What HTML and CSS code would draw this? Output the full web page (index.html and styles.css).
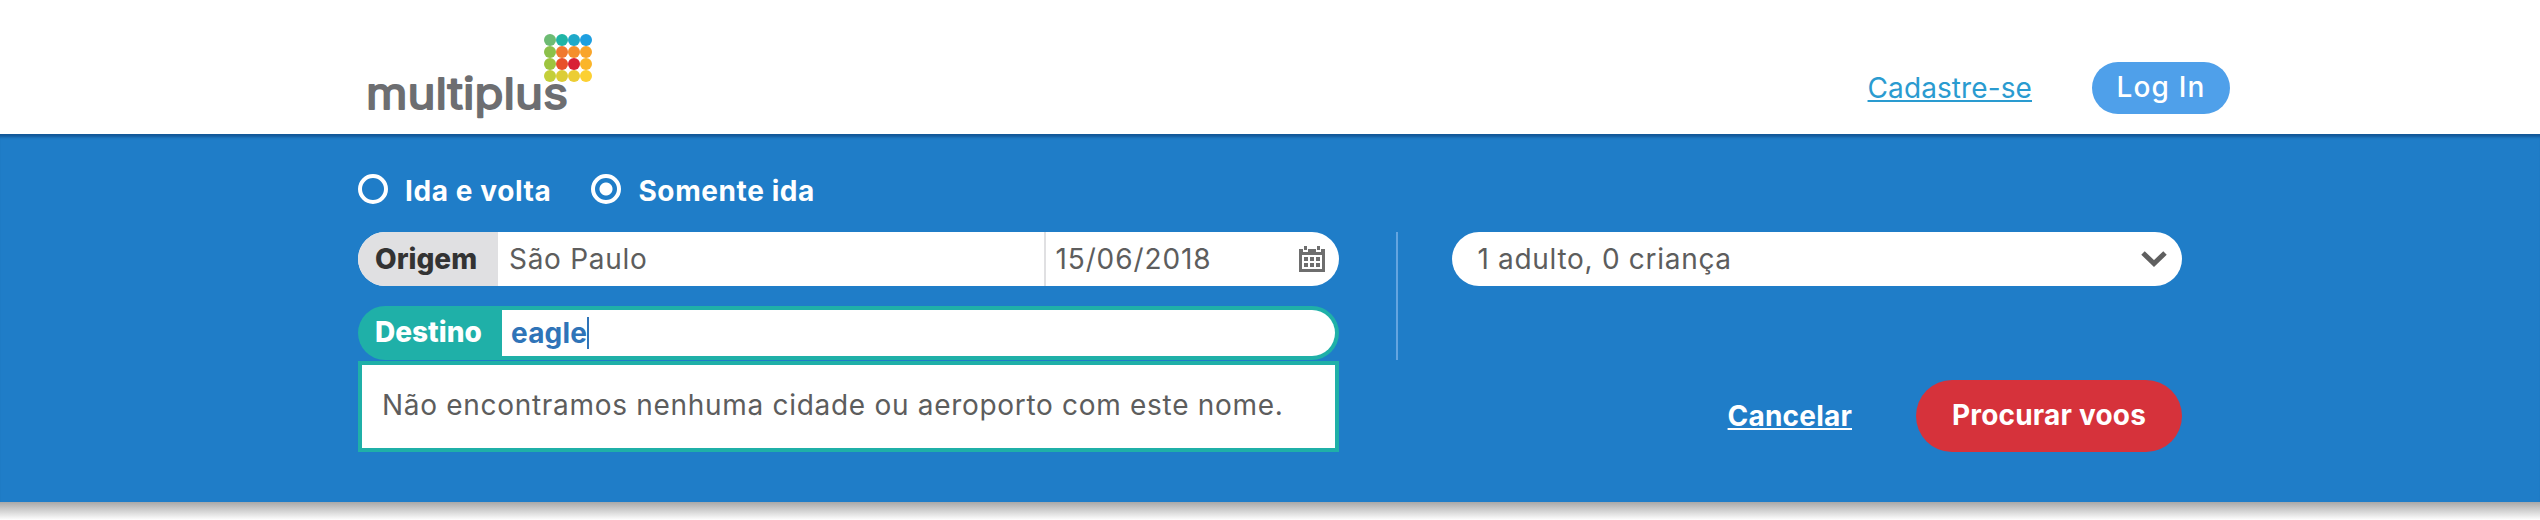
FILE: index.html
```html
<!DOCTYPE html>
<html lang="pt-br">
<head>
  <meta charset="UTF-8">
  <meta name="viewport" content="width=device-width, initial-scale=1.0">
  <title>Multiplus - Procurar voos</title>
  <link rel="stylesheet" href="styles.css">
</head>
<body>
<header class="topo">
  <svg class="logo" width="232" height="100" viewBox="0 0 232 100">
    <g>
      <circle cx="188" cy="10" r="6" fill="#6dbb73"/><circle cx="200" cy="10" r="6" fill="#1fb5a6"/><circle cx="212" cy="10" r="6" fill="#1fa9c9"/><circle cx="224" cy="10" r="6" fill="#1e9fe0"/>
      <circle cx="188" cy="22" r="6" fill="#8cc04a"/><circle cx="200" cy="22" r="6" fill="#f0792f"/><circle cx="212" cy="22" r="6" fill="#f58f2c"/><circle cx="224" cy="22" r="6" fill="#f9a52b"/>
      <circle cx="188" cy="34" r="6" fill="#9ec43f"/><circle cx="200" cy="34" r="6" fill="#e8502a"/><circle cx="212" cy="34" r="6" fill="#d81f35"/><circle cx="224" cy="34" r="6" fill="#fbb52a"/>
      <circle cx="188" cy="46" r="6" fill="#c4cf3a"/><circle cx="200" cy="46" r="6" fill="#dccd36"/><circle cx="212" cy="46" r="6" fill="#eccd34"/><circle cx="224" cy="46" r="6" fill="#fcd033"/>
    </g>
    <text class="logo-texto" x="4" y="79" textLength="202" lengthAdjust="spacingAndGlyphs">multiplus</text>
  </svg>
  <nav class="acesso">
    <a class="cadastro" href="#">Cadastre-se</a>
    <a class="login" href="#">Log In</a>
  </nav>
</header>

<section class="busca">
  <div class="tipos">
    <label class="tipo"><span class="radio"></span>Ida e volta</label>
    <label class="tipo"><span class="radio marcado"></span>Somente ida</label>
  </div>

  <div class="form">
    <div class="trecho">
      <div class="campo">
        <span class="rotulo">Origem</span>
        <span class="valor">São Paulo</span>
        <span class="data">15/06/2018
          <svg class="calendario" width="26" height="26" viewBox="0 0 26 26">
            <path fill="#6e6e6e" d="M5 0h3v4h-3zM18 0h3v4h-3zM0 3h4v3h5v-3h8v3h5v-3h4v23h-26z"/>
            <path fill="#fff" d="M3 9h20v14h-20z"/>
            <path fill="#6e6e6e" d="M5 11h4v4h-4zM11 11h4v4h-4zM17 11h4v4h-4zM5 17h4v4h-4zM11 17h4v4h-4zM17 17h4v4h-4z"/>
          </svg>
        </span>
      </div>
      <div class="campo ativo">
        <span class="rotulo">Destino</span>
        <span class="valor digitado"><span class="cursor">eagle</span></span>
      </div>
      <div class="sem-resultado">Não encontramos nenhuma cidade ou aeroporto com este nome.</div>
    </div>

    <div class="divisor"></div>

    <div class="lado">
      <div class="passageiros">
        <span>1 adulto, 0 criança</span>
        <svg width="26" height="16" viewBox="0 0 26 16">
          <path fill="none" stroke="#5f5f5f" stroke-width="5" d="M2 2l11 10.500l11-10.500"/>
        </svg>
      </div>
      <div class="acoes">
        <a class="cancelar" href="#">Cancelar</a>
        <a class="procurar" href="#">Procurar voos</a>
      </div>
    </div>
  </div>
</section>
<div class="sombra"></div>
</body>
</html>
```

FILE: styles.css
```css
body { margin: 0; background: #fff; font-family: Inter, "Noto Sans", sans-serif; font-size: 28px; letter-spacing: .7px; color: #5d5d5d; overflow: hidden; }
a { color: inherit; }

.topo { height: 134px; box-sizing: border-box; padding: 24px 310px 0 362px; display: flex; justify-content: space-between; align-items: flex-start; background: #fff; }
.logo { display: block; margin-top: 6px; }
.logo-texto { font-family: Inter, sans-serif; font-size: 43px; font-weight: 400; letter-spacing: 0; fill: #6d6e71; stroke: #6d6e71; stroke-width: 1.800px; stroke-linejoin: round; }
.acesso { display: flex; align-items: center; gap: 60px; margin-top: 38px; }
.cadastro { color: #2a9bd0; letter-spacing: .1px; }
.login { display: block; width: 138px; height: 52px; line-height: 50px; text-align: center; border-radius: 26px; background: #4fa0ea; color: #fff; text-decoration: none; font-weight: 500; letter-spacing: 1.200px; }

.busca { height: 368px; box-sizing: border-box; padding: 40px 358px 0; background: #1f7dc8; box-shadow: inset 0 5px 3px -2px rgba(0,40,90,.45); }
.sombra { height: 18px; background: linear-gradient(#a8a8a8, #fff); }

.tipos { display: flex; gap: 40px; height: 30px; margin-bottom: 28px; }
.tipo { display: flex; align-items: center; gap: 17px; color: #fff; font-weight: 700; letter-spacing: .6px; padding-top: 4px; }
.radio { display: block; width: 30px; height: 30px; margin-top: -4px; box-sizing: border-box; border: 4px solid #fff; border-radius: 50%; }
.radio.marcado { background: radial-gradient(circle, #fff 0 6px, transparent 7px); }

.form { display: flex; align-items: flex-start; }
.trecho { width: 982px; }
.divisor { width: 2px; height: 128px; margin: 0 54px 0 57px; background: #64a5e0; }
.lado { width: 730px; }

.campo { display: flex; align-items: center; height: 54px; border-radius: 27px; background: #fff; overflow: hidden; }
.campo + .campo { margin-top: 20px; }
.rotulo { width: 140px; height: 100%; line-height: 54px; box-sizing: border-box; padding-left: 17px; background: #e0e0e2; color: #333; font-weight: 800; letter-spacing: 0; }
.valor { flex: 1; padding-left: 11px; line-height: 58px; }
.data { display: flex; align-items: center; justify-content: space-between; width: 295px; height: 100%; box-sizing: border-box; padding: 0 14px 0 9px; border-left: 2px solid #e0e0e2; letter-spacing: .9px; }

.ativo { background: #1fb0a8; padding: 4px 4px 4px 0; box-sizing: border-box; }
.ativo .rotulo { width: 144px; line-height: 44px; background: none; color: #fff; }
.ativo .valor { height: 100%; line-height: 46px; background: #fff; border-radius: 0 23px 23px 0; padding-left: 9px; letter-spacing: .2px; }
.digitado { color: #2f74b8; font-weight: 700; }
.cursor { display: inline-block; height: 32px; line-height: 32px; border-right: 2px solid #2f74b8; }

.sem-resultado { margin-top: 1px; height: 91px; line-height: 81px; box-sizing: border-box; padding-left: 20px; border: 4px solid #1fb0a8; background: #fff; }

.passageiros { display: flex; align-items: center; justify-content: space-between; height: 54px; box-sizing: border-box; padding: 0 15px 0 25px; border-radius: 27px; background: #fff; }
.acoes { display: flex; align-items: center; justify-content: flex-end; gap: 64px; margin-top: 94px; }
.cancelar { color: #fff; font-weight: 700; letter-spacing: .2px; }
.procurar { display: block; width: 266px; height: 72px; line-height: 70px; text-align: center; border-radius: 36px; background: #d6323b; color: #fff; text-decoration: none; font-weight: 700; letter-spacing: .2px; }
```
